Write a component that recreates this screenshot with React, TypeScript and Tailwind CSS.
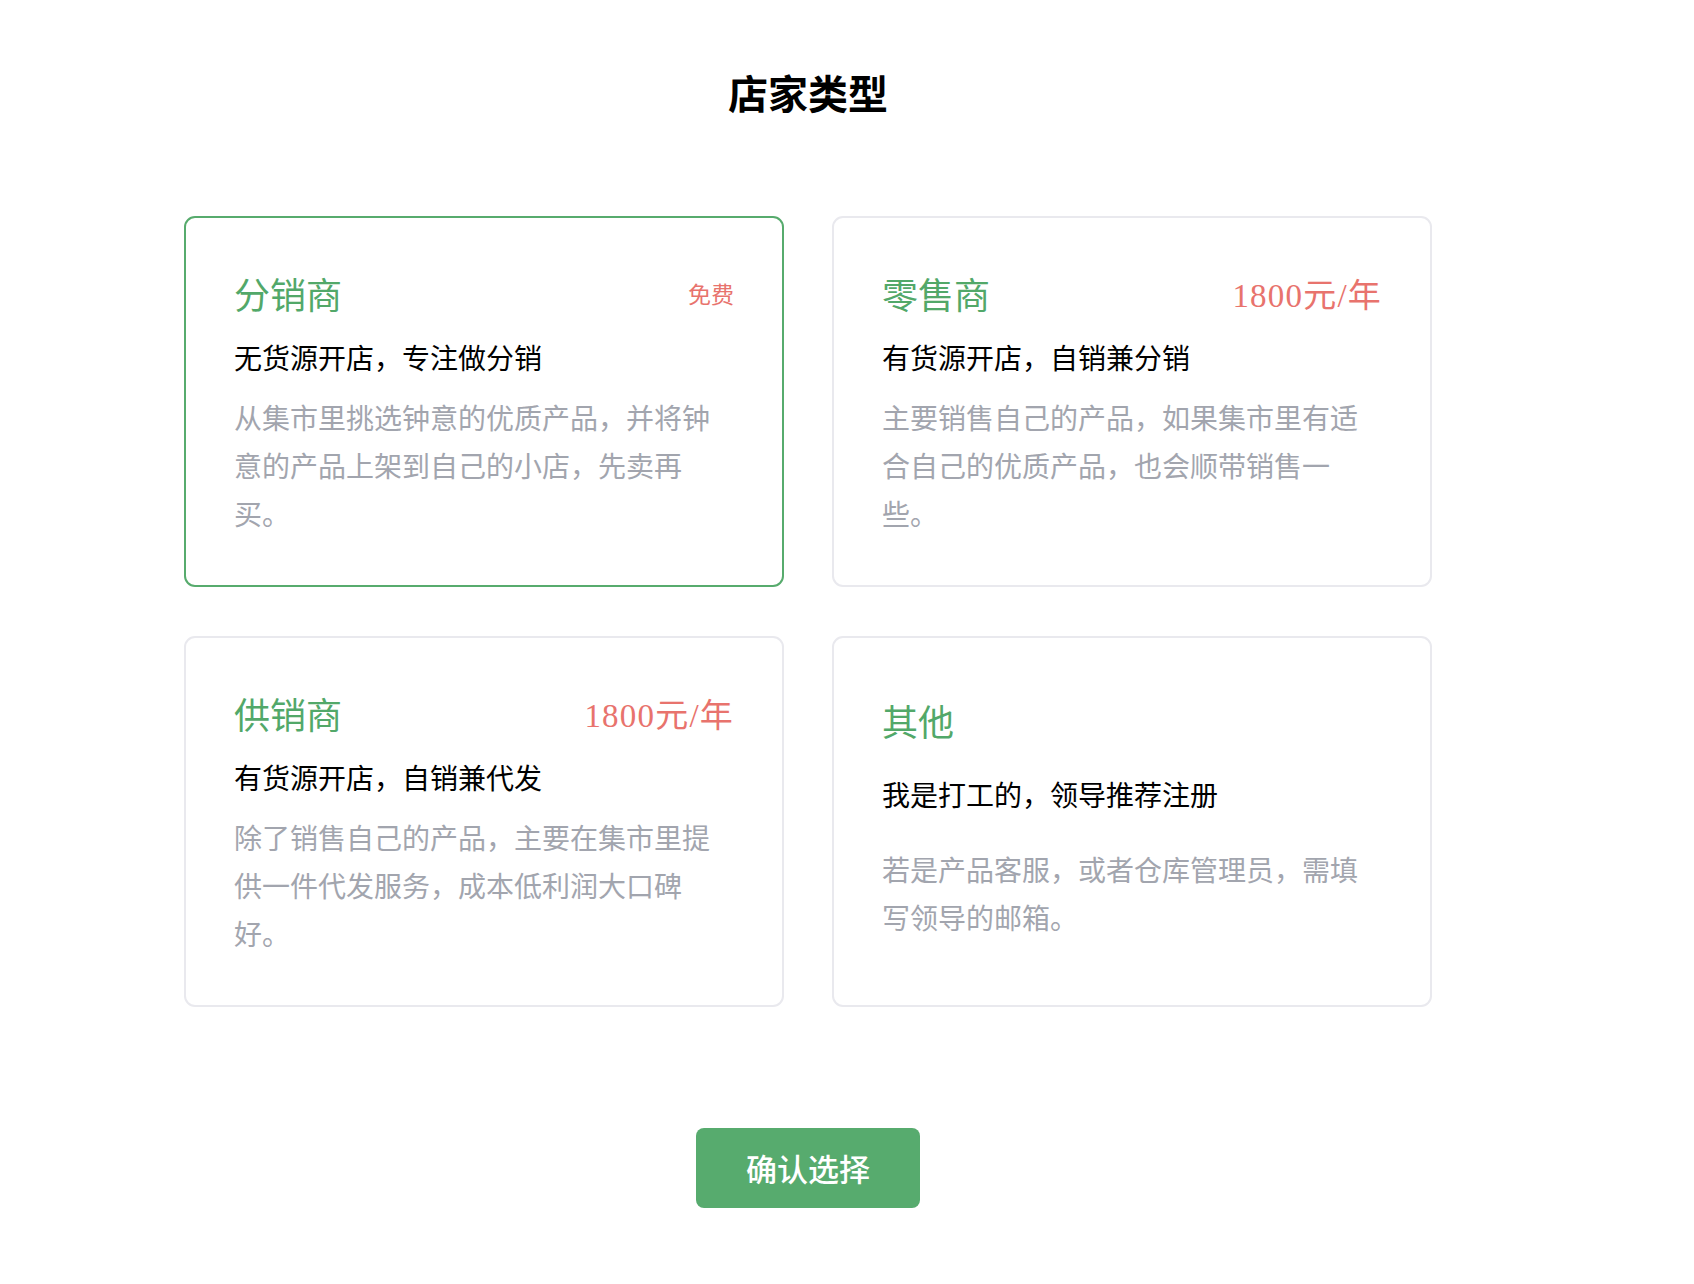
import React from "react";

type Card = {
  name: string;
  price?: string;
  priceSerif?: boolean;
  sub: string;
  desc: string;
  selected?: boolean;
  other?: boolean;
};

const cards: Card[] = [
  {
    name: "分销商",
    price: "免费",
    sub: "无货源开店，专注做分销",
    desc: "从集市里挑选钟意的优质产品，并将钟意的产品上架到自己的小店，先卖再买。",
    selected: true,
  },
  {
    name: "零售商",
    price: "1800元/年",
    priceSerif: true,
    sub: "有货源开店，自销兼分销",
    desc: "主要销售自己的产品，如果集市里有适合自己的优质产品，也会顺带销售一些。",
  },
  {
    name: "供销商",
    price: "1800元/年",
    priceSerif: true,
    sub: "有货源开店，自销兼代发",
    desc: "除了销售自己的产品，主要在集市里提供一件代发服务，成本低利润大口碑好。",
  },
  {
    name: "其他",
    sub: "我是打工的，领导推荐注册",
    desc: "若是产品客服，或者仓库管理员，需填写领导的邮箱。",
    other: true,
  },
];

function CardView({ c }: { c: Card }) {
  return (
    <div
      className={
        c.selected
          ? "h-[371px] rounded-[11px] border-2 border-[#57ab6d] bg-white px-[48px] pt-[51px]"
          : c.other
          ? "h-[371px] rounded-[11px] border-2 border-[#e9e9ee] bg-white px-[48px] pt-[58px]"
          : "h-[371px] rounded-[11px] border-2 border-[#e9e9ee] bg-white px-[48px] pt-[51px]"
      }
    >
      <div className="flex h-[48px] items-center justify-between">
        <span className="text-[36px] leading-[48px] text-[#52a869]">{c.name}</span>
        {c.price &&
          (c.priceSerif ? (
            <span className="mt-[5px] font-['Liberation_Serif','Noto_Sans_CJK_SC',serif] text-[33px] leading-[48px] tracking-[1.2px] text-[#e8736d]">
              {c.price}
            </span>
          ) : (
            <span className="text-[23px] leading-[48px] text-[#e8736d]">{c.price}</span>
          ))}
      </div>
      <div
        className={
          c.other
            ? "mt-[30px] text-[28px] leading-[40px] text-black"
            : "mt-[20px] text-[28px] leading-[40px] text-black"
        }
      >
        {c.sub}
      </div>
      <div
        className={
          c.other
            ? "mt-[31px] text-[28px] leading-[48px] text-[#a2a5ae]"
            : "mt-[16px] text-[28px] leading-[48px] text-[#a2a5ae]"
        }
      >
        {c.desc}
      </div>
    </div>
  );
}

export default function App() {
  return (
    <div className="min-h-screen w-full bg-white font-['Noto_Sans_CJK_SC',sans-serif]">
      <div className="flex w-[1616px] flex-col items-center pt-[64px] pb-[77px]">
        <h1 className="text-[40px] font-bold leading-[56px] text-black">店家类型</h1>
        <div className="mt-[96px] grid w-[1248px] grid-cols-2 gap-x-[48px] gap-y-[49px]">
          {cards.map((c) => (
            <CardView key={c.name} c={c} />
          ))}
        </div>
        <button className="mt-[121px] flex h-[80px] w-[224px] items-center justify-center rounded-[8px] bg-[#57ab6e] text-[31px] font-medium text-white">
          确认选择
        </button>
      </div>
    </div>
  );
}
